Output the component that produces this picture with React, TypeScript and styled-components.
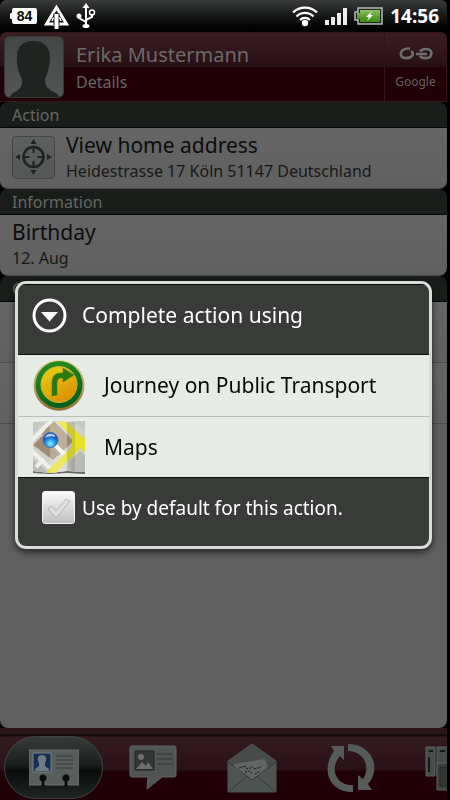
import React from "react";
import styled, { createGlobalStyle } from "styled-components";

const GlobalStyle = createGlobalStyle`
  * { box-sizing: border-box; }
  body {
    margin: 0;
    background: #000;
    font-family: "Noto Sans", "Open Sans", sans-serif;
    overflow: hidden;
  }
  button { font: inherit; border: 0; padding: 0; background: none; cursor: pointer; }
  h1, h2, p { margin: 0; font-weight: 400; }
  svg { display: block; flex: none; }
`;

const Screen = styled.div`
  height: 100vh;
  display: flex;
  flex-direction: column;
  padding-right: 3px;
  background: #000;
`;

const StatusBar = styled.div`
  height: 32px;
  flex: none;
  display: flex;
  align-items: center;
  gap: 7px;
  padding: 0 8px 0 10px;
  border-radius: 6px 6px 0 0;
  background: linear-gradient(#3a3c3b, #161817 50%, #050505 80%, #000);
`;

const StatusGroup = styled.div<{ $gap: number }>`
  display: flex;
  align-items: center;
  gap: ${(p) => p.$gap}px;
`;

const Spacer = styled.div`
  flex: 1;
`;

const Clock = styled.time`
  font: 700 19px/32px "Noto Sans", "Open Sans", sans-serif;
  color: #fff;
`;

const ContactHeader = styled.header`
  height: 70px;
  flex: none;
  display: flex;
  align-items: center;
  border: 1px solid #38161c;
  border-left: 0;
  border-radius: 6px 6px 0 0;
  background: linear-gradient(#3b1e23, #290f15 50%, #200006 51%, #210006);
`;

const Avatar = styled.div`
  margin-left: 4px;
  width: 60px;
  height: 62px;
  border: 1px solid #353737;
  border-radius: 6px;
  overflow: hidden;
  background: linear-gradient(#444646, #545656);
`;

const HeaderText = styled.div`
  flex: 1;
  padding: 2px 0 0 12px;
`;

const Name = styled.h1`
  font-size: 20px;
  line-height: 28px;
  color: #6d696a;
`;

const Subtitle = styled.p`
  font-size: 16px;
  line-height: 26px;
  color: #686465;
`;

const LinkButton = styled.button`
  align-self: stretch;
  width: 62px;
  display: flex;
  flex-direction: column;
  align-items: center;
  justify-content: space-between;
  padding: 14px 0 9px;
  border-left: 1px solid #30141a;
  font-size: 12px;
  line-height: 20px;
  color: #656162;
`;

const Content = styled.main`
  flex: 1;
  min-height: 0;
  display: flex;
  flex-direction: column;
`;

const SectionTitle = styled.h2`
  flex: none;
  height: 26px;
  padding-left: 12px;
  border-bottom: 1px solid #050605;
  border-radius: 8px 8px 0 0;
  background: #1a1e1a;
  color: #656865;
  font-size: 16px;
  line-height: 26px;
`;

const Entry = styled.button<{ $last?: boolean }>`
  flex: none;
  display: flex;
  align-items: center;
  gap: 11px;
  width: 100%;
  height: 61px;
  padding: 0 0 2px 12px;
  text-align: left;
  color: #0c0c0c;
  background: linear-gradient(#656565, #606060);
  border-bottom: 1px solid #4c4c4c;
  border-radius: ${(p) => (p.$last ? "0 0 8px 8px" : "0")};
`;

const EntryTitle = styled.p`
  font-size: 21px;
  line-height: 28px;
`;

const EntryDetail = styled.p`
  font-size: 16px;
  line-height: 24px;
  color: #181818;
`;

const TargetBox = styled.div`
  width: 43px;
  height: 43px;
  border: 1px solid #424542;
  border-radius: 4px;
  background: linear-gradient(#5e605f, #545755);
  display: grid;
  place-items: center;
`;

const Filler = styled.div`
  flex: 1;
  background: #606060;
  border-radius: 0 0 8px 8px;
`;

const TabBar = styled.nav`
  height: 72px;
  flex: none;
  display: flex;
  align-items: flex-end;
  overflow: hidden;
  padding: 0 0 1px 4px;
  background: linear-gradient(#2c1419 0, #2c1419 6px, #0a0002 7px, #351a20 9px, #2b1017 42px, #210006 43px, #200006);
`;

const Tab = styled.button<{ $active?: boolean }>`
  flex: none;
  width: 99px;
  height: 63px;
  display: grid;
  place-items: center;
  border: 1px solid ${(p) => (p.$active ? "#414443" : "transparent")};
  border-radius: 32px;
  background: ${(p) =>
    p.$active ? "linear-gradient(#373b3a, #1a1f1e 45%, #080b0a 55%, #202725)" : "none"};
`;

const Overlay = styled.div`
  position: fixed;
  inset: 29px 3px 0 0;
  display: flex;
  align-items: center;
  padding: 0 15px;
`;

const Dialog = styled.div`
  width: 100%;
  overflow: hidden;
  border: 3px solid #d9dcd9;
  border-radius: 11px;
  background: #383b37;
  box-shadow: 0 3px 7px rgba(0, 0, 0, 0.65);
`;

const DialogTitle = styled.h2`
  height: 71px;
  display: flex;
  align-items: center;
  gap: 15px;
  padding: 0 14px 8px;
  border-top: 1px solid #0c0e0c;
  border-bottom: 1px solid #0c0e0c;
  color: #fff;
  font-size: 21px;
`;

const Choice = styled.button`
  display: flex;
  align-items: center;
  gap: 18px;
  width: 100%;
  height: 61px;
  padding-left: 14px;
  background: #e7ebe6;
  color: #080808;
  font-size: 21px;
  & + & { border-top: 1px solid #b8bdb8; }
`;

const DefaultRow = styled.label`
  height: 69px;
  display: flex;
  align-items: center;
  gap: 7px;
  padding: 0 0 8px 24px;
  border-top: 1px solid #0c0e0c;
  color: #fff;
  font-size: 19px;
`;

const CheckWrap = styled.span`
  display: grid;
  width: 33px;
  height: 33px;
  & > * { grid-area: 1 / 1; place-self: center; }
  svg { pointer-events: none; opacity: 0.8; }
  input:checked + svg { opacity: 1; color: #3f9a2f; }
`;

const Check = styled.input`
  appearance: none;
  margin: 0;
  width: 33px;
  height: 33px;
  border: 1px solid #f4f4f4;
  border-radius: 3px;
  background: linear-gradient(#fbfbfb, #dcdcdc 50%, #bfc1c0);
`;

const BatteryCount = () => (
  <svg width="27" height="18" viewBox="0 0 27 18">
    <rect x="2" y="1" width="25" height="16" rx="2" fill="#fff" />
    <rect x="0" y="6" width="3" height="6" rx="1" fill="#fff" />
    <text x="14.5" y="14" textAnchor="middle" fontFamily="Liberation Sans, sans-serif" fontWeight="700" fontSize="14" fill="#080808">84</text>
  </svg>
);

const TriangleIcon = () => (
  <svg width="27" height="28" viewBox="0 0 27 28">
    <path d="M13.5 5.500 23.500 22H3.500Z" fill="none" stroke="#fff" strokeWidth="3" />
    <path d="M10.500 11.500h6V23h-6Z" fill="#171918" />
    <path d="M11.500 12h4v15h-4Z" fill="#fff" />
    <path d="M10.500 15.500 9 19M16.500 15.500 18 19" stroke="#fff" strokeWidth="1.500" />
  </svg>
);

const UsbIcon = () => (
  <svg width="20" height="26" viewBox="0 0 20 26" fill="none" stroke="#fff" strokeWidth="2">
    <path d="M10 3V22M3 13v2l7 4M16 11v3l-6 3" />
    <path d="m10 0 3.500 5h-7Z" fill="#fff" stroke="none" />
    <circle cx="3" cy="13" r="2.500" fill="#fff" stroke="none" />
    <circle cx="16" cy="9.500" r="2.500" strokeWidth="1.500" />
    <ellipse cx="10" cy="23" rx="3.500" ry="2" fill="#fff" stroke="none" />
  </svg>
);

const WifiIcon = () => (
  <svg width="26" height="22" viewBox="0 0 26 22" fill="none" stroke="#fff" strokeWidth="2.300">
    <path d="M1 7.500a17 17 0 0 1 24 0M4.500 11.500a12 12 0 0 1 17 0M8 15a7 7 0 0 1 10 0" />
    <circle cx="13" cy="18" r="3.200" fill="#fff" stroke="none" />
  </svg>
);

const SignalIcon = () => (
  <svg width="22" height="18" viewBox="0 0 22 18" fill="#ededed">
    <path d="M0 13h4v5H0zM6 10h4v8H6zM12 6h4v12h-4zM18 1h4v17h-4z" />
  </svg>
);

const BatteryIcon = () => (
  <svg width="29" height="18" viewBox="0 0 29 18">
    <defs>
      <linearGradient id="cell" x2="0" y2="1">
        <stop stopColor="#8cc265" />
        <stop offset=".5" stopColor="#5da02f" />
        <stop offset="1" stopColor="#3f8a1a" />
      </linearGradient>
    </defs>
    <path d="M4 1h24v16H4v-4H1V5h3Z" fill="#242824" stroke="#b5bab4" strokeWidth="1.500" />
    <path d="M6 3h20v12H6v-3H3V6h3Z" fill="url(#cell)" />
    <path d="m18 4-6 6h3l-2 4 6-6h-3Z" fill="#fff" />
  </svg>
);

const Silhouette = () => (
  <svg width="58" height="60" viewBox="0 0 58 60">
    <path d="M27 4C36 3 45 8 45 20c0 11-3 17-5 22 0 8 4 11 11 14l4 4H4l4-4c6-3 10-6 9-14C14 36 11 29 12 18 12 10 18 4 27 4Z" fill="#1f2421" />
  </svg>
);

const ChainIcon = () => (
  <svg width="34" height="14" viewBox="0 0 34 14" fill="none" stroke="#706d6e" strokeWidth="2.600">
    <path d="M11 1.500C5 1 1 4 2 8s8 4 11 1q2-3-1-5" />
    <path d="M21 4.500Q23 2 27 2c5 0 6 3 5 6-1 4-9 4-11 1M17 7h11" />
  </svg>
);

const TargetIcon = () => (
  <svg width="37" height="38" viewBox="0 0 37 38" fill="none" stroke="#202421" strokeWidth="2.600">
    <circle cx="18.500" cy="19" r="10" />
    <path d="M18.500 8v7M18.500 23v7M7.500 19h7M22.500 19h7" strokeWidth="2" />
    <path d="m18.500 1 3 5h-6ZM18.500 37l3-5h-6ZM0 19l5-3v6ZM37 19l-5-3v6Z" fill="#202421" stroke="none" />
  </svg>
);

const DownIcon = () => (
  <svg width="35" height="35" viewBox="0 0 35 35">
    <circle cx="17.500" cy="17.500" r="15.500" fill="none" stroke="#fff" strokeWidth="3" />
    <path d="M9 14h17l-8.500 9.500Z" fill="#fff" />
  </svg>
);

const JourneyIcon = () => (
  <svg width="54" height="54" viewBox="0 0 54 54">
    <defs>
      <linearGradient id="gold" x2="0.600" y2="1">
        <stop stopColor="#e9d51c" />
        <stop offset="1" stopColor="#dc9100" />
      </linearGradient>
      <linearGradient id="rim" x2="0" y2="1">
        <stop stopColor="#e8dfa0" />
        <stop offset="1" stopColor="#8e6b25" />
      </linearGradient>
      <linearGradient id="ring" x2="0.300" y2="1">
        <stop stopColor="#2c921f" />
        <stop offset="1" stopColor="#07601d" />
      </linearGradient>
    </defs>
    <ellipse cx="27" cy="29" rx="25" ry="24" fill="#8c8c7c" opacity=".5" />
    <circle cx="27" cy="27" r="25.500" fill="url(#rim)" />
    <circle cx="27" cy="26.500" r="23.500" fill="url(#ring)" />
    <circle cx="27" cy="26.500" r="18" fill="url(#gold)" stroke="#c4bc36" />
    <path d="M20 38V24q0-9 9-9h2v-5l11 7-11 7v-4h-2q-4 0-4 5v12Z" fill="#2a7913" stroke="#467d16" strokeWidth="0.500" />
  </svg>
);

const MapIcon = () => (
  <svg width="54" height="54" viewBox="0 0 54 54">
    <defs>
      <clipPath id="sheet"><path d="M1 2 18 1l17 1 18-1v51l-18-1-17 2-17-2Z" /></clipPath>
      <radialGradient id="lens" cx=".5" cy=".75">
        <stop stopColor="#8df1ff" />
        <stop offset=".6" stopColor="#279bea" />
        <stop offset="1" stopColor="#1859c4" />
      </radialGradient>
    </defs>
    <path d="m1 51 17 2 17-2 18 1v2l-18-1-17 1-17-1Z" fill="#666" />
    <g clipPath="url(#sheet)">
      <path d="M0 0h54v54H0Z" fill="#d0d1cb" />
      <path d="M0 14 12 2H0ZM40 0h14v12Z" fill="#c6c7c1" />
      <path d="m12 9 8-6v14Z" fill="#8d806f" />
      <path d="m1 25 10-10 9 9 7-17 14 14-20 19Z" fill="#a18c72" />
      <path d="M21 0 41 21 26 36 10 14Z" fill="#a8947b" />
      <path d="M0 38 18 54H0ZM37 42 48 31l6 5v18H40Z" fill="#babbb4" />
      <path d="m0 31 24 23M0 20 20 0M4 47l8-8" stroke="#efefec" strokeWidth="4" />
      <path d="m17 54 30-29M27-1l24 24M44 21h12" fill="none" stroke="#e9df24" strokeWidth="7" />
      <path d="m40 14 8 8 7-6v18l-8-8-7 6Z" fill="#e9df24" />
      <path d="M18 0h17v54H18Z" fill="#fff" opacity=".25" />
      <path d="M35 0h8v54h-8Z" fill="#444" opacity=".15" />
    </g>
    <path d="m23 25 9 9" stroke="#fafafa" strokeWidth="4" />
    <circle cx="18.500" cy="20" r="7.500" fill="url(#lens)" stroke="#3d6fa7" />
    <path d="M13 18q2-5 7-4 4 1 3 3-5-2-10 1Z" fill="#d9edff" opacity=".8" />
  </svg>
);

const TickIcon = () => (
  <svg width="25" height="23" viewBox="0 0 25 23" color="#e1e1e1">
    <path d="m2 13 4-3 4 5L20 3l4 2-13 16H9Z" fill="currentColor" stroke="#a9aaa9" />
  </svg>
);

const CardIcon = () => (
  <svg width="50" height="37" viewBox="0 0 50 37">
    <path d="M0 1h50v35H39v-5a3 3 0 1 0-4 0v5H16v-5a3 3 0 1 0-4 0v5H0Z" fill="#585e5c" stroke="#6c706e" />
    <path d="M4 4h18v19H4Z" fill="#152f52" stroke="#78808a" />
    <path d="M13 6c5 0 5 5 3 8v3l4 3v2H6v-2l4-3v-3c-2-3-2-8 3-8Z" fill="#6d7a82" />
    <path d="M27 7h17M27 11h17M27 15h17M27 19h17" stroke="#353b39" />
    <circle cx="14" cy="29" r="3.500" fill="#0b0d0c" />
    <circle cx="37" cy="29" r="3.500" fill="#0b0d0c" />
    <path d="M14 29v8M37 29v8" stroke="#0b0d0c" strokeWidth="2" />
  </svg>
);

const MessageIcon = () => (
  <svg width="48" height="45" viewBox="0 0 48 45">
    <path d="M3 1h42q2 0 2 2v27q0 2-2 2H33L18 44l1-12H3q-2 0-2-2V3q0-2 2-2Z" fill="#505553" stroke="#606462" />
    <path d="M6 6h19v19H6Z" fill="#323735" stroke="#1f2422" />
    <circle cx="12" cy="12" r="3" fill="#6b6f6d" />
    <path d="m7 24 6-7 4 4 2-4 5 7Z" fill="#6b6f6d" />
    <path d="M28 9h16M28 14h16M28 19h16" stroke="#303533" />
  </svg>
);

const MailIcon = () => (
  <svg width="50" height="50" viewBox="0 0 50 50">
    <path d="M1 18 25 1l24 17v31H1Z" fill="#464c49" stroke="#545956" />
    <path d="m1 19 24 18 24-18v30H1Z" fill="#4e5451" />
    <path d="m7 21 31-5 3 10-16 11L7 25Z" fill="#616663" />
    <path d="m1 19 24 18 24-18M3 48l17-15M47 48 30 33" fill="none" stroke="#343a37" />
    <path d="m12 25 6-2 2 3 6-2M18 29l4-1 4 3M27 26l7-2M28 31l5-3" stroke="#151a17" strokeDasharray="2 1" fill="none" />
  </svg>
);

const SyncIcon = () => (
  <svg width="50" height="50" viewBox="0 0 50 50" fill="#555b58">
    <path d="M5 3h13v14l-4-4C3 25 10 43 27 42v7C4 50-6 27 8 8Z" />
    <path d="M22 1c24 0 34 24 20 40l4 6H32V32l5 4C45 24 38 8 22 8Z" />
  </svg>
);

const CardsIcon = () => (
  <svg width="50" height="46" viewBox="0 0 50 46" fill="#464c4a" stroke="#5b605d">
    <path d="M1 2h9v29H1ZM12 2h22v29H12Z" />
    <path d="M12 18h24v27H12Z" fill="#3b413e" />
    <path d="M4 6h4M15 6h5M4 12v15" stroke="#171c19" strokeWidth="2" />
    <path d="M15 22h10v19H15Z" fill="#323734" stroke="#262b28" />
  </svg>
);

const tabs = [
  { label: "Details", Icon: CardIcon },
  { label: "Messages", Icon: MessageIcon },
  { label: "Mail", Icon: MailIcon },
  { label: "Updates", Icon: SyncIcon },
  { label: "Gallery", Icon: CardsIcon },
];

export default function App() {
  return (
    <>
      <GlobalStyle />
      <Screen>
        <StatusBar>
          <StatusGroup $gap={6}>
            <BatteryCount />
            <TriangleIcon />
            <UsbIcon />
          </StatusGroup>
          <Spacer />
          <StatusGroup $gap={7}>
            <WifiIcon />
            <SignalIcon />
            <BatteryIcon />
            <Clock>14:56</Clock>
          </StatusGroup>
        </StatusBar>
        <ContactHeader>
          <Avatar><Silhouette /></Avatar>
          <HeaderText>
            <Name>Erika Mustermann</Name>
            <Subtitle>Details</Subtitle>
          </HeaderText>
          <LinkButton><ChainIcon />Google</LinkButton>
        </ContactHeader>
        <Content>
          <SectionTitle>Action</SectionTitle>
          <Entry $last>
            <TargetBox><TargetIcon /></TargetBox>
            <div>
              <EntryTitle>View home address</EntryTitle>
              <EntryDetail>Heidestrasse 17 Köln 51147 Deutschland</EntryDetail>
            </div>
          </Entry>
          <SectionTitle>Information</SectionTitle>
          <Entry $last>
            <div>
              <EntryTitle>Birthday</EntryTitle>
              <EntryDetail>12. Aug</EntryDetail>
            </div>
          </Entry>
          <SectionTitle>C</SectionTitle>
          <Entry aria-label="First option" />
          <Entry aria-label="Second option" />
          <Filler />
        </Content>
        <TabBar>
          {tabs.map(({ label, Icon }, i) => (
            <Tab key={label} aria-label={label} $active={i === 0}><Icon /></Tab>
          ))}
        </TabBar>
      </Screen>
      <Overlay>
        <Dialog role="dialog" aria-modal="true" aria-labelledby="dialog-title">
          <DialogTitle id="dialog-title"><DownIcon />Complete action using</DialogTitle>
          <Choice><JourneyIcon />Journey on Public Transport</Choice>
          <Choice><MapIcon />Maps</Choice>
          <DefaultRow>
            <CheckWrap><Check type="checkbox" /><TickIcon /></CheckWrap>
            Use by default for this action.
          </DefaultRow>
        </Dialog>
      </Overlay>
    </>
  );
}
